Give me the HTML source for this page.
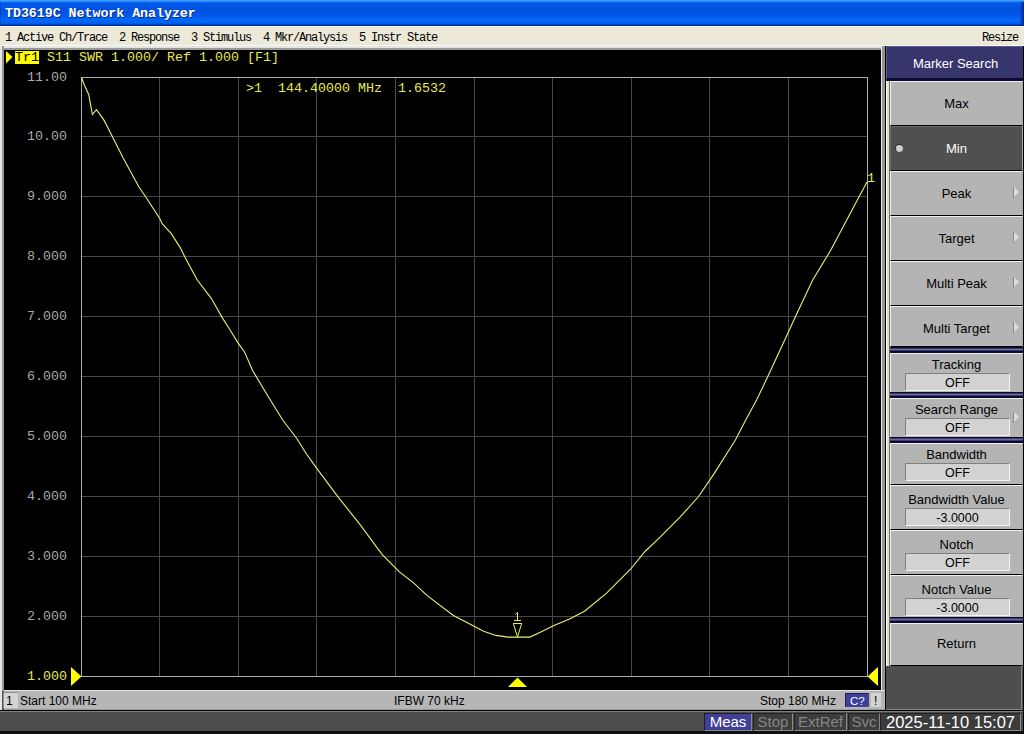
<!DOCTYPE html>
<html><head><meta charset="utf-8">
<style>
*{margin:0;padding:0;box-sizing:border-box}
html,body{width:1024px;height:734px;overflow:hidden;background:#505050;font-family:"Liberation Sans",sans-serif}
.a{position:absolute}
#title{left:0;top:0;width:1024px;height:26px;background:linear-gradient(#3c9cff 0px,#3c9cff 1px,#0a62f2 2.5px,#0057e8 4px,#0052dc 10px,#0056e8 15px,#0068f8 20px,#0062f0 23px,#0044cc 24.5px,#0030a0 25px,#0030a0 26px)}
#title span{position:absolute;left:5px;top:6px;font:bold 13.33px/16px "Liberation Mono",monospace;color:#fff;letter-spacing:-0.05px;text-shadow:1px 1px 0 #0a2a80}
#menu{left:0;top:26px;width:1024px;height:20px;background:#ece9d8;border-top:1px solid #fff;border-bottom:1px solid #f8f8f4}
.mono{font-family:"Liberation Mono",monospace}
#menu span{position:absolute;top:4px;font:12px/14px "Liberation Mono",monospace;letter-spacing:-1.2px;color:#000;white-space:pre}
#lframe{left:0;top:46px;width:2px;height:665px;background:#e6e6e6}
#lframe2{left:2px;top:46px;width:2px;height:645px;background:#969696}
#tframe{left:0;top:46px;width:886px;height:4px;background:linear-gradient(#e4e4e4 0,#e4e4e4 2px,#989898 2px,#989898 4px)}
#chart{left:4px;top:50px;width:877px;height:640px;background:#000}
#rframe1{left:881px;top:46px;width:1px;height:665px;background:#e8e8e8}
#rframe2{left:882px;top:46px;width:3px;height:665px;background:#949494}
#rframe3{left:885px;top:46px;width:1px;height:665px;background:#000}
#footer{left:4px;top:690px;width:881px;height:20px;background:#b6b6b6;border-top:1px solid #e0e0e0;border-bottom:1px solid #9a9a9a}
.ft{position:absolute;font:12px/14px "Liberation Sans",sans-serif;color:#000;white-space:pre}
#status{left:0;top:710px;width:1024px;height:24px;background:linear-gradient(#000 0,#000 1px,#808080 1px,#808080 2px,#4c4c4c 2px,#4c4c4c 21px,#101010 21px)}
.sb{position:absolute;top:713px;height:18px;background:#3c3c3c;border-top:1px solid #202020;border-left:1px solid #202020;border-bottom:1px solid #8a8a8a;border-right:1px solid #8a8a8a;font:15px/16px "Liberation Sans",sans-serif;color:#858585;text-align:center;white-space:pre}
/* softkeys */
#skcol{left:886px;top:46px;width:5px;height:620px;background:linear-gradient(90deg,#fdfdf0 0,#fdfdf0 1px,#e0e0d0 1px,#e0e0d0 3px,#6f6f60 3px,#6f6f60 4px,#e8e8e0 4px)}
#skhead{left:886px;top:46px;width:138px;height:35px;background:#36366c;border-top:1px solid #5a5a90;border-left:1px solid #5a5a90;border-bottom:3px solid #0a0a30;color:#fff;font:13px/33px "Liberation Sans",sans-serif;text-align:center}
.btn{position:absolute;left:890px;width:133px;background:#b4b4b4;border-top:1px solid #f0f0f0;border-left:1px solid #f0f0f0;border-right:1px solid #a8a8a8;border-bottom:1px solid #000;color:#000;font:13px/14px "Liberation Sans",sans-serif;text-align:center}
.btn.dark{background:#505050;color:#fff;border-top:1px solid #6a6a6a;border-left:1px solid #6a6a6a}
.lbl{position:absolute;left:0;width:131px;text-align:center;white-space:pre}
.sep{position:absolute;left:890px;width:133px;height:6px;background:linear-gradient(#0a0a28 0,#0a0a28 1px,#3a3a70 1px,#3a3a70 1.5px,#6a6aa0 2.5px,#3a3a70 3.5px,#0a0a28 4.5px,#0a0a28 6px)}
.box{position:absolute;left:14px;width:105px;height:18px;background:#d2d2d2;border-top:1px solid #808080;border-left:1px solid #808080;border-bottom:1px solid #f4f4f4;border-right:1px solid #f4f4f4;text-align:center;font:12.5px/17px "Liberation Sans",sans-serif;padding-top:1px}
.arr{position:absolute;left:123px;width:0;height:0;border-top:5.5px solid transparent;border-bottom:5.5px solid transparent;border-left:5px solid #dcdcdc}
.arr::before{content:"";position:absolute;left:-6px;top:-5.5px;width:1px;height:11px;background:#888888}
#skbottom{left:886px;top:666px;width:136px;height:44px;background:#4e4e4e;border-right:1px solid #8a8a8a;border-bottom:1px solid #8a8a8a}
</style></head><body>
<div id="title" class="a"><span>TD3619C Network Analyzer</span><div class="a" style="left:1020px;top:2px;width:4px;height:23px;background:linear-gradient(90deg,rgba(0,40,170,0),#0030b0 60%,#0028a0)"></div><div class="a" style="left:0;top:2px;width:1px;height:23px;background:#0048d0"></div></div>
<div id="menu" class="a">
<span style="left:5px">1 Active Ch/Trace  2 Response  3 Stimulus  4 Mkr/Analysis  5 Instr State</span>
<span style="left:982px">Resize</span>
</div>
<div id="tframe" class="a"></div>
<div id="lframe" class="a"></div>
<div id="lframe2" class="a"></div>
<div id="chart" class="a"></div>
<div id="rframe1" class="a"></div>
<div id="rframe2" class="a"></div>
<div id="rframe3" class="a"></div>

<svg class="a" style="left:0;top:0" width="1024" height="734" viewBox="0 0 1024 734">
<path d="M159.5 77V677M238.5 77V677M316.5 77V677M395.5 77V677M474.5 77V677M552.5 77V677M631.5 77V677M709.5 77V677M788.5 77V677M81 136.5H868M81 196.5H868M81 256.5H868M81 316.5H868M81 376.5H868M81 436.5H868M81 496.5H868M81 556.5H868M81 616.5H868" stroke="#484848" stroke-width="1" fill="none"/>
<rect x="81.5" y="77.5" width="786" height="599" stroke="#b0b0b0" stroke-width="1" fill="none"/>
<path id="trace" d="M81.5 77.5 L84.2 84.7 L88.7 94.5 L91.1 107.6 L92.4 114.6 L96.4 109.7 L103.8 119.9 L108.7 129.3 L112.3 136.6 L123.2 158.1 L138.8 186.8 L146.3 197.7 L159.9 218.8 L162.3 223.9 L171.3 233.7 L180.2 247.6 L185.1 257.4 L197.4 280.3 L211.3 298.3 L221.9 317.1 L230.1 330.0 L238.0 342.9 L244.5 351.9 L252.7 370.7 L267.4 395.2 L282.7 420.0 L296.8 438.5 L306.3 453.7 L316.2 467.6 L337.4 496.2 L360.3 524.8 L378.3 549.3 L382.3 554.7 L399.4 571.9 L414.1 583.3 L427.2 595.6 L453.4 615.5 L474.6 626.6 L483.6 631.3 L495.9 635.4 L508.1 637.1 L529.9 637.1 L540.8 632.0 L554.5 625.2 L569.0 619.3 L584.5 611.2 L606.6 593.2 L630.3 569.5 L645.0 551.5 L658.1 539.2 L680.0 517.2 L698.6 496.5 L714.1 473.6 L735.4 440.0 L746.8 418.0 L756.6 400.0 L767.8 376.5 L789.0 330.7 L795.6 316.3 L812.7 280.0 L830.7 250.3 L860.8 193.6 L867.0 182.1" stroke="#f0f070" stroke-width="1.1" fill="none"/>
<path d="M71 667L81.5 676.5L71 686Z" fill="#ffff00"/>
<path d="M878 667L867.5 676.5L878 686Z" fill="#ffff00"/>
<path d="M508 687L517.5 677.5L527 687Z" fill="#ffff00"/>
<path d="M513 623.5H522M513.5 624L517.5 637L521.5 624" stroke="#f0f048" stroke-width="1" fill="none"/>
<path d="M514 620.5H521M517.5 620V612.5L515.5 614.5" stroke="#f0f048" stroke-width="1" fill="none"/>
<path d="M6 51L12.5 57L6 63.5Z" fill="#ffff00"/>
<rect x="15" y="51" width="24" height="13" fill="#ffff00"/>
</svg>

<div class="a mono" style="left:15px;top:50px;font-size:13.33px;line-height:15px;color:#000;white-space:pre">Tr1</div>
<div class="a mono" style="left:47px;top:50px;font-size:13.33px;line-height:15px;color:#e8e850;white-space:pre">S11 SWR 1.000/ Ref 1.000 [F1]</div>
<div class="a mono" style="left:246px;top:81px;font-size:13.33px;line-height:15px;color:#e8e850;white-space:pre">&gt;1  144.40000 MHz  1.6532</div>
<div class="a mono" style="left:27px;top:70px;font-size:13.33px;line-height:15px;color:#a8a8a8;white-space:pre">11.00</div>
<div class="a mono" style="left:27px;top:129px;font-size:13.33px;line-height:15px;color:#a8a8a8;white-space:pre">10.00</div>
<div class="a mono" style="left:27px;top:189px;font-size:13.33px;line-height:15px;color:#a8a8a8;white-space:pre">9.000</div>
<div class="a mono" style="left:27px;top:249px;font-size:13.33px;line-height:15px;color:#a8a8a8;white-space:pre">8.000</div>
<div class="a mono" style="left:27px;top:309px;font-size:13.33px;line-height:15px;color:#a8a8a8;white-space:pre">7.000</div>
<div class="a mono" style="left:27px;top:369px;font-size:13.33px;line-height:15px;color:#a8a8a8;white-space:pre">6.000</div>
<div class="a mono" style="left:27px;top:429px;font-size:13.33px;line-height:15px;color:#a8a8a8;white-space:pre">5.000</div>
<div class="a mono" style="left:27px;top:489px;font-size:13.33px;line-height:15px;color:#a8a8a8;white-space:pre">4.000</div>
<div class="a mono" style="left:27px;top:549px;font-size:13.33px;line-height:15px;color:#a8a8a8;white-space:pre">3.000</div>
<div class="a mono" style="left:27px;top:609px;font-size:13.33px;line-height:15px;color:#a8a8a8;white-space:pre">2.000</div>
<div class="a mono" style="left:27px;top:669px;font-size:13.33px;line-height:15px;color:#e8e850;white-space:pre">1.000</div>
<div class="a mono" style="left:867px;top:171px;font-size:13.33px;line-height:15px;color:#e8e850">1</div>
<div id="footer" class="a">
 <div class="a" style="left:-1px;top:1px;width:15px;height:16px;background:#d4d4d4;border-top:1px solid #909090;border-left:1px solid #909090"></div>
 <span class="ft" style="left:2px;top:3px">1</span>
 <span class="ft" style="left:16px;top:3px">Start 100 MHz</span>
 <span class="ft" style="left:390px;top:3px">IFBW 70 kHz</span>
 <span class="ft" style="left:756px;top:3px">Stop 180 MHz</span>
 <div class="a" style="left:841px;top:2px;width:24px;height:14px;background:#40409a;border-top:1px solid #202060;border-left:1px solid #202060"></div>
 <span class="ft" style="left:846px;top:3px;color:#fff;font-size:11.5px">C?</span>
 <div class="a" style="left:867px;top:2px;width:10px;height:14px;background:#d4d4d4"></div>
 <span class="ft" style="left:870px;top:3px">!</span>
</div>
<div id="status" class="a"></div>
<div class="sb" style="left:704px;width:48px;background:#40409a;color:#fff">Meas</div>
<div class="sb" style="left:753px;width:40px">Stop</div>
<div class="sb" style="left:794px;width:53px">ExtRef</div>
<div class="sb" style="left:848px;width:32px">Svc</div>
<div class="sb" style="left:880px;width:141px;color:#fff;font-size:16.5px">2025-11-10 15:07</div>

<div id="skcol" class="a"></div>
<div id="skhead" class="a">Marker Search</div>
<div class="btn" style="top:81px;height:45px"><span class="lbl" style="top:15px">Max</span></div>
<div class="btn dark" style="top:126px;height:45px"><span class="lbl" style="top:15px">Min</span><div class="a" style="left:4px;top:17px;width:8px;height:8px;border-radius:50%;background:#d0d0d0;border-top:1px solid #202020;border-left:1px solid #303030"></div></div>
<div class="btn" style="top:171px;height:45px"><span class="lbl" style="top:15px">Peak</span><div class="arr" style="top:15px"></div></div>
<div class="btn" style="top:216px;height:45px"><span class="lbl" style="top:15px">Target</span><div class="arr" style="top:15px"></div></div>
<div class="btn" style="top:261px;height:45px"><span class="lbl" style="top:15px">Multi Peak</span><div class="arr" style="top:15px"></div></div>
<div class="btn" style="top:306px;height:41px"><span class="lbl" style="top:15px">Multi Target</span><div class="arr" style="top:15px"></div></div>
<div class="sep" style="top:347px"></div>
<div class="btn" style="top:353px;height:39px;border-bottom:none"><span class="lbl" style="top:4px">Tracking</span><div class="box" style="top:19px">OFF</div></div>
<div class="sep" style="top:392px"></div>
<div class="btn" style="top:398px;height:39px;border-bottom:none"><span class="lbl" style="top:4px">Search Range</span><div class="box" style="top:19px">OFF</div><div class="arr" style="top:13px"></div></div>
<div class="sep" style="top:437px"></div>
<div class="btn" style="top:443px;height:42px"><span class="lbl" style="top:4px">Bandwidth</span><div class="box" style="top:19px">OFF</div></div>
<div class="btn" style="top:485px;height:45px"><span class="lbl" style="top:7px">Bandwidth Value</span><div class="box" style="top:22px">-3.0000</div></div>
<div class="btn" style="top:530px;height:45px"><span class="lbl" style="top:7px">Notch</span><div class="box" style="top:22px">OFF</div></div>
<div class="btn" style="top:575px;height:42px;border-bottom:none"><span class="lbl" style="top:7px">Notch Value</span><div class="box" style="top:22px">-3.0000</div></div>
<div class="sep" style="top:617px"></div>
<div class="btn" style="top:623px;height:43px"><span class="lbl" style="top:13px">Return</span></div>
<div id="skbottom" class="a"></div>
<div class="a" style="left:1023px;top:46px;width:1px;height:688px;background:#000"></div>
</body></html>
